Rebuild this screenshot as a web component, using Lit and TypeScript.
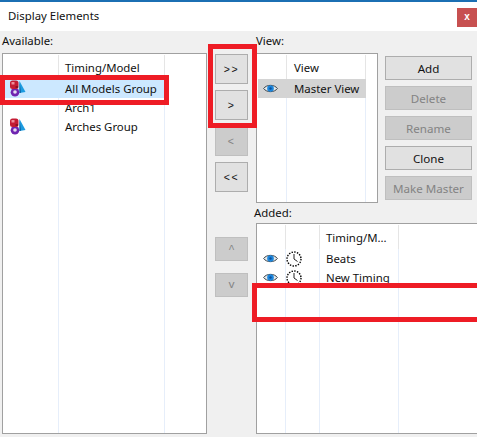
import { LitElement, html, css } from "lit";
import { customElement } from "lit/decorators.js";

const eye = () => html`<svg class="ico eye" width="15" height="11" viewBox="0 0 15 11">
  <path d="M0.6 5.5 C3.5 1.3 11.5 1.3 14.4 5.5 C11.5 9.7 3.5 9.7 0.6 5.5Z" fill="#e3e8ea" stroke="#3b444b" stroke-width="1"/>
  <circle cx="7.5" cy="5.5" r="3.3" fill="#1c86dc"/><circle cx="7.5" cy="5.5" r="1.2" fill="#0c4f9a"/>
</svg>`;

const clock = () => html`<svg class="ico clk" width="16" height="16" viewBox="0 0 16 16">
  <circle cx="8" cy="8" r="7" fill="#fff" stroke="#000" stroke-width="1.4" stroke-dasharray="1.45 1.3"/>
  <path d="M8 3V8L11.5 10.5" fill="none" stroke="#222" stroke-width="1"/>
</svg>`;

const group = () => html`<svg class="ico grp" width="17" height="17" viewBox="0 0 17 17">
  <path d="M10.5 1 L16.5 12 L10.5 13Z" fill="#1d9be0"/>
  <path d="M10.5 1 L12 12.7 L10.5 13Z" fill="#0b5f9e"/>
  <circle cx="6" cy="12.3" r="4.3" fill="#6f24b0"/>
  <circle cx="6" cy="12" r="1.8" fill="#e4dcf0"/>
  <rect x="1" y="0.5" width="8.5" height="8.5" rx="2.5" fill="#c41c34"/>
  <rect x="2.5" y="2" width="3" height="2.5" fill="#ee8d9a"/>
  <rect x="6.5" y="6" width="2.5" height="2" fill="#8a1224"/>
</svg>`;

type Col = { w: number; head: string; cells: unknown[]; text?: boolean };

@customElement("app-root")
export class AppRoot extends LitElement {
  static styles = css`
    :host { display: block; width: 477px; height: 437px; position: relative; overflow: hidden; background: #f0f0f0;
      font-family: "Noto Sans", sans-serif; font-size: 11.4px; color: #111; }
    .title { height: 29px; margin: 0; border-top: 2px solid #1b6fb3; background: #fff; display: flex; justify-content: space-between; align-items: flex-start; }
    .title span { margin: 5px 0 0 8px; line-height: 18px; font-size: 11.4px; }
    .close { width: 20px; height: 19px; margin-top: 6px; background: #c75050; color: #fff; font: bold 10px/18px "Liberation Sans", sans-serif; text-align: center; }
    .main { display: grid; grid-template-columns: 205px 33px 221px; column-gap: 8px; padding: 0 0 0 2px; height: 406px; width: 475px; box-sizing: border-box; }
    .label { line-height: 16px; padding-top: 2px; height: 22px; box-sizing: border-box; }
    .list { border: 1px solid #a0a0a0; background: #fff; display: flex; box-sizing: border-box; padding: 1px 0 0 1px; overflow: hidden; }
    .left { display: flex; flex-direction: column; height: 403px; }
    .left .list { flex: 1; }
    .col { border-right: 1px solid #e6eefa; box-sizing: border-box; flex: none; height: 100%; }
    .col.last { border-right: none; flex: 1; }
    .cell { height: 19px; display: flex; align-items: center; white-space: nowrap; overflow: hidden; box-sizing: border-box; }
    .head { height: 24px; margin-right: -1px; border-right: 1px solid #e5e5e5; }
    .text { padding-left: 6px; }
    .view .text { padding-left: 7px; }
    .sel-blue { background: #cce8ff; margin-right: -1px; }
    .sel-gray { background: #d4d4d4; margin-right: -1px; }
    .ico { display: block; margin-left: 5px; flex: none; }
    .clk { margin-left: 0; }
    .mid { display: flex; flex-direction: column; padding-top: 23px; }
    .btn { box-sizing: border-box; border: 1px solid #adadad; background: #e1e1e1; display: flex; align-items: center; justify-content: center; color: #111; }
    .btn.off { background: #ccc; border-color: #bfbfbf; color: #838383; }
    .arrow { height: 30px; margin-bottom: 6px; font: 10.5px "Liberation Sans", sans-serif; letter-spacing: 1.5px; }
    .move { display: flex; flex-direction: column; gap: 12px; margin-top: 39px; }
    .move .btn { height: 24px; font: 11px "Liberation Mono", monospace; }
    .right { display: flex; flex-direction: column; }
    .top { display: grid; grid-template-columns: 122px 87px; column-gap: 7px; }
    .view { height: 150px; }
    .actions { display: flex; flex-direction: column; gap: 6px; padding-top: 25px; }
    .actions .btn { height: 24px; font-size: 11.6px; }
    .added-label { margin: 2px 0 1px -2px; height: 17px; padding: 0; line-height: 16px; }
    .added { height: 211px; width: 230px; }
    .mark { position: absolute; border: 5px solid #ee1c25; box-sizing: border-box; pointer-events: none; }
    .m1 { left: 0; top: 75px; width: 169px; height: 30px; }
    .m2 { left: 208px; top: 44px; width: 49px; height: 84px; }
    .m3 { left: 252px; top: 283px; width: 230px; height: 39px; }
  `;

  list(cols: Col[], selRow: number, selCls: string, cls: string) {
    return html`<div class="list ${cls}">
      ${cols.map((c, ci) => html`<div class="col ${ci === cols.length - 1 ? "last" : ""}" style="width:${c.w}px">
        <div class="cell head ${c.text ? "text" : ""}" style="${ci === cols.length - 1 ? "border-right:none" : ""}">${c.head}</div>
        ${c.cells.map((v, r) => html`<div class="cell ${c.text ? "text" : ""} ${r === selRow ? selCls : ""}">${v}</div>`)}
      </div>`)}
    </div>`;
  }

  render() {
    const avail: Col[] = [
      { w: 55, head: "", cells: [group(), "", group()] },
      { w: 106, head: "Timing/Model", cells: ["All Models Group", "Arch1", "Arches Group"], text: true },
      { w: 40, head: "", cells: [] },
    ];
    const view: Col[] = [
      { w: 29, head: "", cells: [eye()] },
      { w: 79, head: "View", cells: ["Master View"], text: true },
      { w: 10, head: "", cells: [] },
    ];
    const added: Col[] = [
      { w: 28, head: "", cells: [eye(), eye()] },
      { w: 34, head: "", cells: [clock(), clock()] },
      { w: 79, head: "Timing/M...", cells: ["Beats", "New Timing"], text: true },
      { w: 60, head: "", cells: [] },
    ];
    return html`
      <div class="title"><span>Display Elements</span><div class="close">x</div></div>
      <div class="main">
        <div class="left">
          <div class="label">Available:</div>
          ${this.list(avail, 0, "sel-blue", "")}
        </div>
        <div class="mid">
          <div class="btn arrow">&gt;&gt;</div>
          <div class="btn arrow">&gt;</div>
          <div class="btn arrow off">&lt;</div>
          <div class="btn arrow">&lt;&lt;</div>
          <div class="move">
            <div class="btn off">^</div>
            <div class="btn off">v</div>
          </div>
        </div>
        <div class="right">
          <div class="top">
            <div>
              <div class="label">View:</div>
              ${this.list(view, 0, "sel-gray", "view")}
            </div>
            <div class="actions">
              <div class="btn">Add</div>
              <div class="btn off">Delete</div>
              <div class="btn off">Rename</div>
              <div class="btn">Clone</div>
              <div class="btn off">Make Master</div>
            </div>
          </div>
          <div class="label added-label">Added:</div>
          ${this.list(added, -1, "", "added")}
        </div>
      </div>
      <div class="mark m1"></div>
      <div class="mark m2"></div>
      <div class="mark m3"></div>
    `;
  }
}
